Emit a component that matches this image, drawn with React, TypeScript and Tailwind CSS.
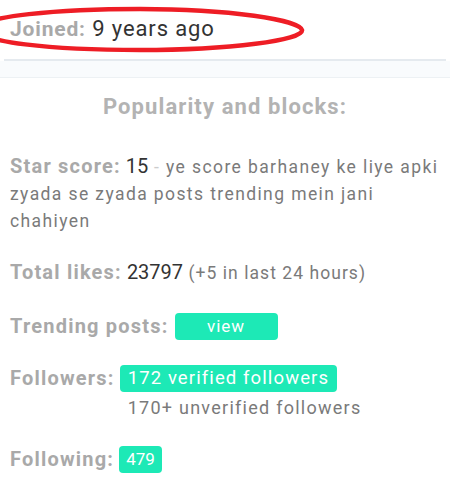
import React from 'react'

// Profile stats panel: joined info (circled in red) + popularity block
function Label({ children }: { children: React.ReactNode }) {
  return <span className="font-bold text-[#a9a9a9] text-[20px] leading-[27px] tracking-[0.06em]">{children}</span>
}

function Pill({ children, className = '' }: { children: React.ReactNode; className?: string }) {
  return (
    <span className={`inline-flex items-center justify-center rounded-[4px] bg-[#1de9b6] text-white ${className}`}>
      {children}
    </span>
  )
}

export default function App() {
  return (
    <div
      className="relative w-[450px] h-[488px] overflow-hidden bg-white"
      style={{ fontFamily: 'Roboto, "Noto Sans", sans-serif' }}
    >
      <div className="mx-[4px] h-[61px] border-b-2 border-[#e5eaef] pt-[12px] pl-[6px]">
        <span className="font-bold text-[#a9a9a9] text-[21px] tracking-[0.04em]">Joined:</span>
        <span className="text-[#333] text-[22px] tracking-[0.04em]"> 9 years ago</span>
      </div>
      <div className="h-[17px] bg-[#f9fbfd] border-b border-[#edf1f4]" />

      <div className="px-[10px]">
        <h3 className="mt-[12px] text-center font-bold text-[22px] leading-[33px] text-[#b3b3b3] tracking-[0.05em]">
          Popularity and blocks:
        </h3>

        <p className="mt-[30px] text-[17.5px] leading-[27px] text-[#7a7a7a] tracking-[0.08em]">
          <Label>Star score:</Label>
          <span className="text-[#333] text-[20px] tracking-normal"> 15</span>
          <span className="text-[#ccc]"> - </span>
          ye score barhaney ke liye apki zyada se zyada posts trending mein jani chahiyen
        </p>

        <p className="mt-[24px] text-[17.5px] leading-[27px] text-[#7a7a7a] tracking-[0.06em]">
          <Label>Total likes:</Label>
          <span className="text-[#333] text-[20px] tracking-normal"> 23797</span> (+5 in last 24 hours)
        </p>

        <div className="mt-[26px] flex items-center gap-[6px]">
          <Label>Trending posts:</Label>
          <Pill className="w-[103px] h-[27px] text-[17px] tracking-[0.06em]">view</Pill>
        </div>

        <div className="mt-[25px] flex items-start gap-[5px]">
          <div className="h-[27px] flex items-center">
            <Label>Followers:</Label>
          </div>
          <div className="flex flex-col items-start">
            <Pill className="h-[27px] px-[8px] text-[18.5px] tracking-[0.06em]">172 verified followers</Pill>
            <span className="pl-[8px] mt-[2px] text-[18px] leading-[27px] text-[#7a7a7a] tracking-[0.07em]">
              170+ unverified followers
            </span>
          </div>
        </div>

        <div className="mt-[25px] flex items-center gap-[5px]">
          <Label>Following:</Label>
          <Pill className="h-[27px] px-[7px] text-[17px]">479</Pill>
        </div>
      </div>

      <svg className="absolute left-0 top-0 pointer-events-none" width="450" height="70" viewBox="0 0 450 70">
        <path
          d="M 302 30 C 300 20, 230 9, 140 9 C 60 9, -22 16, -22 29 C -22 42, 50 50, 140 50 C 230 50, 304 40, 302 30 Z"
          fill="none"
          stroke="#ee1d25"
          strokeWidth="4.5"
        />
      </svg>
    </div>
  )
}
